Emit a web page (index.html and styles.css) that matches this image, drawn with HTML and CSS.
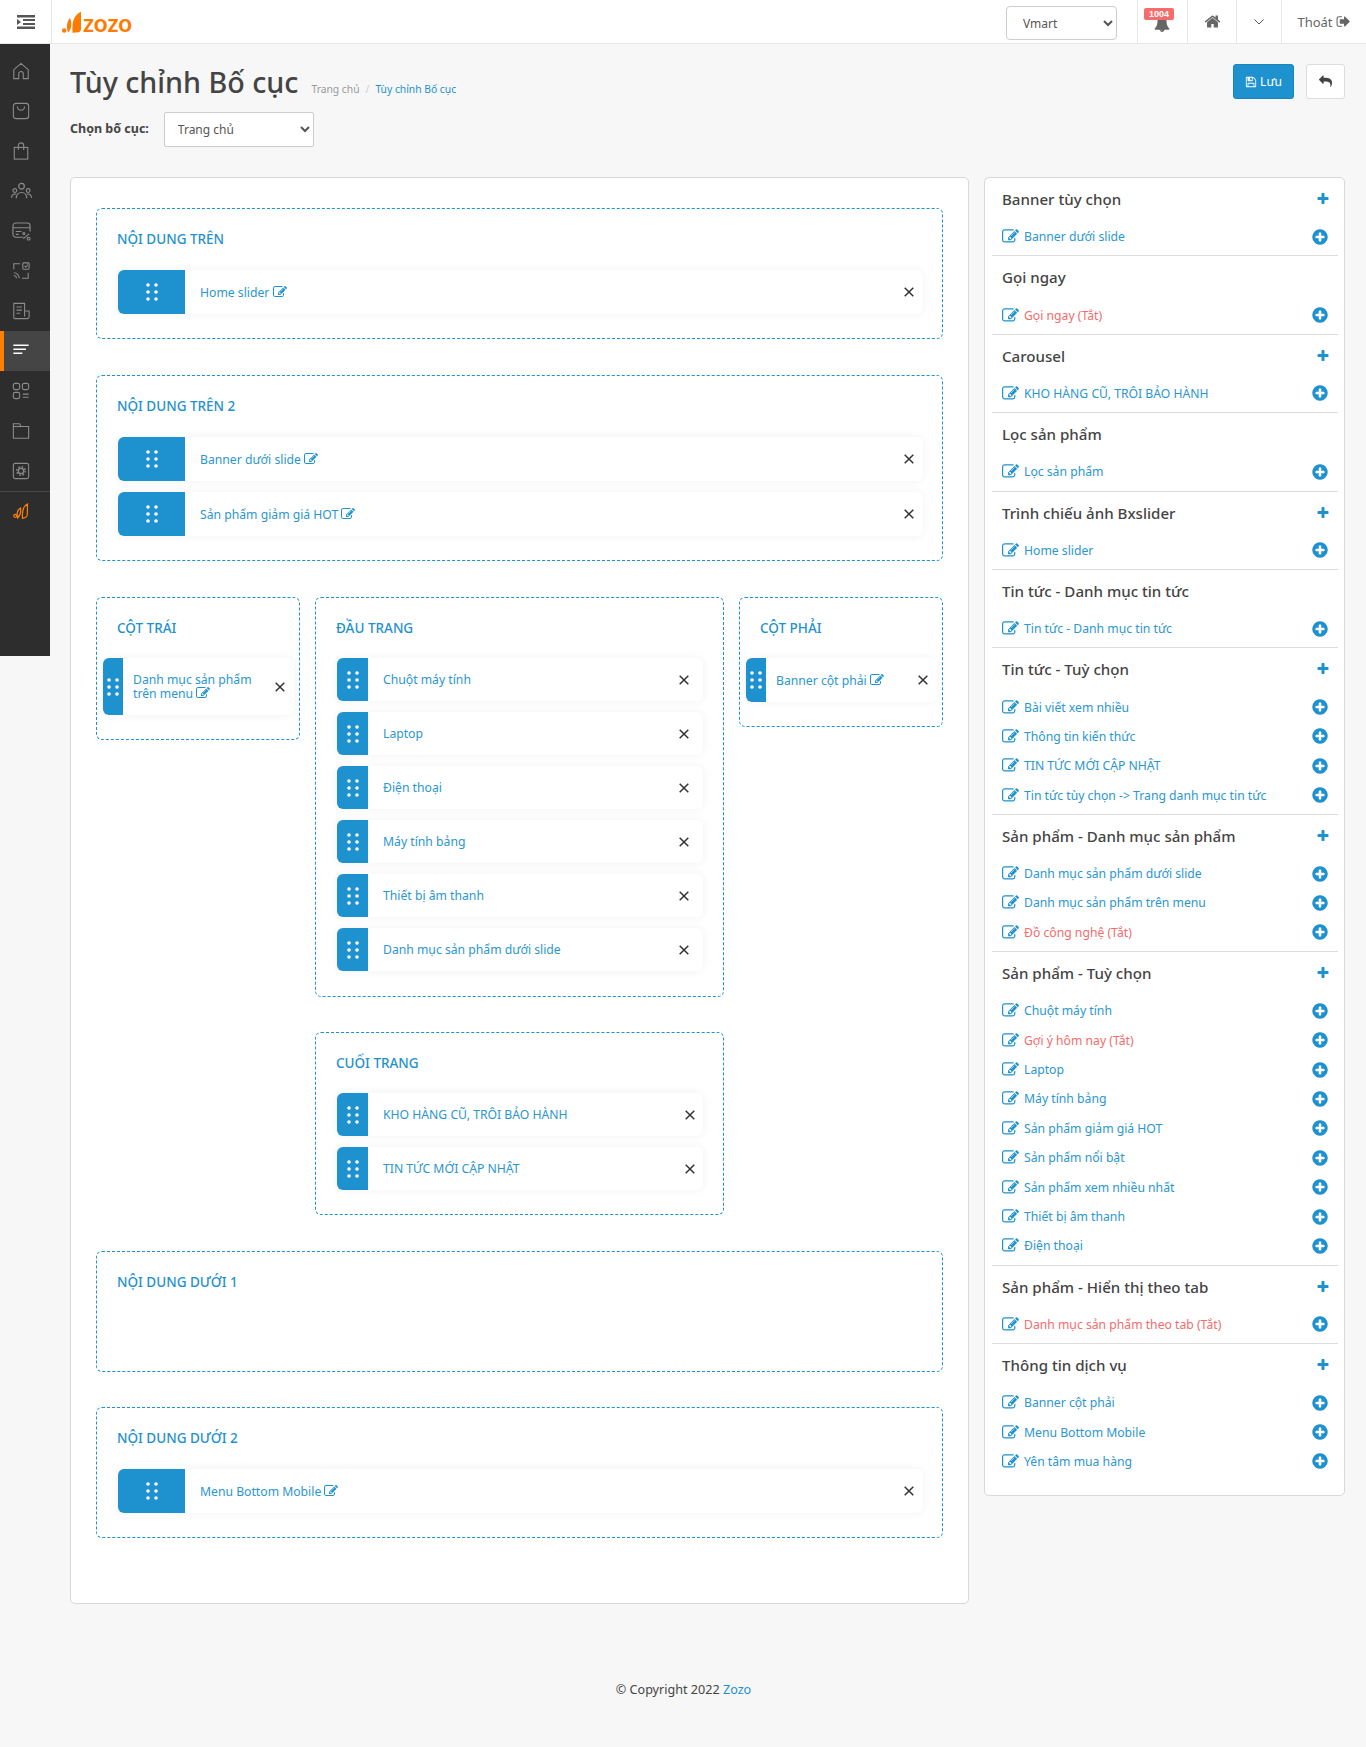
FILE: index.html
```html
<!DOCTYPE html>
<html lang="vi">
<head>
<meta charset="utf-8">
<title>Tùy chỉnh Bố cục</title>
<link rel="stylesheet" href="styles.css">
</head>
<body>
<svg class="defs" aria-hidden="true">
<symbol id="i-edit" viewBox="0 0 1792 1792"><path d="M888 1184l116-116-152-152-116 116v56h96v96h56zm440-720q-16-16-33 1l-350 350q-17 17-1 33t33-1l350-350q17-17 1-33zm80 594v190q0 119-84.5 203.5t-203.5 84.5h-832q-119 0-203.5-84.5t-84.5-203.5v-832q0-119 84.5-203.5t203.5-84.5h832q63 0 117 25 15 7 18 23 3 17-9 29l-49 49q-14 14-32 8-23-6-45-6h-832q-66 0-113 47t-47 113v832q0 66 47 113t113 47h832q66 0 113-47t47-113v-126q0-13 9-22l64-64q15-15 35-7t20 29zm-96-738l288 288-672 672h-288v-288zm444 132l-92 92-288-288 92-92q28-28 68-28t68 28l152 152q28 28 28 68t-28 68z"/></symbol>
<symbol id="i-pc" viewBox="0 0 1792 1792"><path d="M1344 960v-128q0-26-19-45t-45-19h-256v-256q0-26-19-45t-45-19h-128q-26 0-45 19t-19 45v256h-256q-26 0-45 19t-19 45v128q0 26 19 45t45 19h256v256q0 26 19 45t45 19h128q26 0 45-19t19-45v-256h256q26 0 45-19t19-45zm320-64q0 209-103 385.5t-279.5 279.5-385.5 103-385.5-103-279.5-279.5-103-385.5 103-385.5 279.5-279.5 385.5-103 385.5 103 279.5 279.5 103 385.5z"/></symbol>
<symbol id="i-plus" viewBox="0 0 1792 1792"><path d="M1600 736v192q0 40-28 68t-68 28h-416v416q0 40-28 68t-68 28h-192q-40 0-68-28t-28-68v-416h-416q-40 0-68-28t-28-68v-192q0-40 28-68t68-28h416v-416q0-40 28-68t68-28h192q40 0 68 28t28 68v416h416q40 0 68 28t28 68z"/></symbol>
<symbol id="i-grip" viewBox="0 0 12 18"><circle cx="2" cy="2" r="1.8"/><circle cx="10" cy="2" r="1.8"/><circle cx="2" cy="9" r="1.8"/><circle cx="10" cy="9" r="1.8"/><circle cx="2" cy="16" r="1.8"/><circle cx="10" cy="16" r="1.8"/></symbol>
<symbol id="i-x" viewBox="0 0 10 10"><path d="M.7.7l8.6 8.6M9.3.7L.7 9.3" fill="none" stroke="currentColor" stroke-width="1.5"/></symbol>
</svg>

<header class="topbar">
  <button class="toggle" type="button" aria-label="Menu">
    <svg class="toggle-ico" viewBox="0 0 18 14"><path d="M0 0h18v2.4H0zM6 4h12v2H6zM6 8h12v2H6zM0 11.6h18V14H0zM0 4l4 3-4 3z" fill="#555"/></svg>
  </button>
  <a class="logo" href="#">
    <svg class="logo-mark" viewBox="0 0 20 22"><circle cx="2.2" cy="19.5" r="2.2" fill="#ff7a00"/><path d="M8 7C5 10 4 16 6 21.500 9 19 10.500 13 8 7z" fill="#ff7a00"/><path d="M19 .8C13 4 9.500 9 10.500 21.800L17 21.200C18.500 20.300 19 19 19 17.500z" fill="#ff7a00"/></svg>
    <span class="logo-text">zozo</span>
  </a>
  <div class="top-right">
    <select class="shop-select"><option>Vmart</option></select>
    <a class="top-cell cell-bell" href="#">
      <span class="badge">1004</span>
      <svg class="bell" viewBox="0 0 1792 1792"><path d="M912 1696q0-16-16-16-59 0-101.5-42.5t-42.5-101.5q0-16-16-16t-16 16q0 73 51.5 124.5t124.5 51.5q16 0 16-16zm816-288q0 52-38 90t-90 38h-448q0 106-75 181t-181 75-181-75-75-181h-448q-52 0-90-38t-38-90q50-42 91-88t85-119.5 74.5-158.5 50-206 19.5-260q0-152 117-282.5t307-158.5q-8-19-8-39 0-40 28-68t68-28 68 28 28 68q0 20-8 39 190 28 307 158.5t117 282.5q0 139 19.5 260t50 206 74.5 158.5 85 119.5 91 88z"/></svg>
    </a>
    <a class="top-cell cell-home" href="#"><svg class="home" viewBox="0 0 1792 1792"><path d="M1472 992v480q0 26-19 45t-45 19h-384v-384h-256v384h-384q-26 0-45-19t-19-45v-480q0-1 .5-3t.5-3l575-474 575 474q1 2 1 6zm223-69l-62 74q-8 9-21 11h-3q-13 0-21-7l-692-577-692 577q-12 8-24 7-13-2-21-11l-62-74q-8-10-7-23.5t11-21.5l719-599q32-26 76-26t76 26l244 204v-195q0-14 9-23t23-9h192q14 0 23 9t9 23v408l219 182q10 8 11 21.5t-7 23.5z"/></svg></a>
    <a class="top-cell cell-down" href="#"><svg class="chev" viewBox="0 0 10 6"><path d="M.5.5L5 5 9.500.5" fill="none" stroke="#555" stroke-width="1"/></svg></a>
    <a class="top-cell cell-out" href="#">Thoát <svg class="out" viewBox="0 0 1792 1792"><path d="M704 1440q0 4 1 20t.5 26.5-3 23.5-10 19.5-20.5 6.500h-320q-119 0-203.5-84.5t-84.5-203.5v-704q0-119 84.5-203.5t203.5-84.5h320q13 0 22.5 9.500t9.500 22.500q0 4 1 20t.5 26.500-3 23.500-10 19.500-20.500 6.500h-320q-66 0-113 47t-47 113v704q0 66 47 113t113 47h312l11.500 1 11.500 3 8 5.500 7 9 2 13.500zm928-544q0 26-19 45l-544 544q-19 19-45 19t-45-19-19-45v-288h-448q-26 0-45-19t-19-45v-384q0-26 19-45t45-19h448v-288q0-26 19-45t45-19 45 19l544 544q19 19 19 45z"/></svg></a>
  </div>
</header>

<div class="shell">
  <nav class="sidebar">
    <a class="nav-item" href="#"><svg viewBox="0 0 20 20"><path d="M2 18.500V8.500L10 1.500l8 7V18.500h-5.500v-5.500a2.500 2.500 0 0 0-5 0V18.500z"/></svg></a>
    <a class="nav-item" href="#"><svg viewBox="0 0 20 20"><rect x="1.500" y="1.500" width="17" height="17" rx="3"/><path d="M6 5c.5 5.500 7.500 5.500 8 0"/></svg></a>
    <a class="nav-item" href="#"><svg viewBox="0 0 20 20"><rect x="2.500" y="6" width="15" height="13"/><path d="M7 9V4a3 3 0 0 1 6 0v5"/></svg></a>
    <a class="nav-item nav-wide" href="#"><svg viewBox="0 0 22 20"><circle cx="11" cy="4.500" r="3"/><circle cx="4" cy="9" r="2"/><circle cx="18" cy="9" r="2"/><path d="M5.500 17c0-8 11-8 11 0M.5 16.500c0-3.500 3-4.500 5-3.500M21.500 16.500c0-3.500-3-4.500-5-3.500"/></svg></a>
    <a class="nav-item nav-wide" href="#"><svg viewBox="0 0 20 20"><path d="M12 16H4a3 3 0 0 1-3-3V4a3 3 0 0 1 3-3h12a3 3 0 0 1 3 3v6M1 6h18M4 10h6M4 13h3M12 17.500l6-5"/><circle cx="12.500" cy="12" r="1"/><circle cx="17.500" cy="17.500" r="1.500"/></svg></a>
    <a class="nav-item" href="#"><svg viewBox="0 0 20 20"><path d="M2 8V2h7M18 12v6h-7M2 12a6 6 0 0 1 6 6M2 15a3 3 0 0 1 3 3"/><rect x="12" y="1" width="7" height="7" rx="1"/><path d="M14 4.500l1.300 1.300L17.500 3"/></svg></a>
    <a class="nav-item" href="#"><svg viewBox="0 0 20 20"><path d="M14 16V1.500H2v16a1 1 0 0 0 1 1h14a2 2 0 0 0 2-2V10h-5M5 5.500h6M5 9h6M5 12.500h4"/></svg></a>
    <a class="nav-item nav-active" href="#"><svg viewBox="0 0 20 20"><path d="M1.500 3.500h17M1.500 8h14M1.500 12.500h10" stroke-width="1.700"/></svg></a>
    <a class="nav-item" href="#"><svg viewBox="0 0 20 20"><rect x="1.500" y="1.500" width="7" height="7" rx="2"/><rect x="11.500" y="1.500" width="7" height="7" rx="2"/><rect x="1.500" y="11.500" width="7" height="7" rx="2"/><path d="M12 13.500h6.500M12 17h6.500"/></svg></a>
    <a class="nav-item" href="#"><svg viewBox="0 0 20 20"><path d="M1.500 18V2h7l1.500 3h8.500v13z"/><path d="M1.500 5h8.500"/></svg></a>
    <a class="nav-item" href="#"><svg viewBox="0 0 20 20"><rect x="1.500" y="1.500" width="17" height="17" rx="2"/><circle cx="10" cy="10" r="3" stroke-width="1.400"/><circle cx="10" cy="10" r="4.700" stroke-width="1.600" stroke-dasharray="1.850 1.840"/></svg></a>
    <a class="nav-item nav-brand" href="#"><svg viewBox="0 0 16 16"><circle cx="2.200" cy="12.800" r="1.500"/><path d="M7.500 5C4.500 7 3.600 11 4.600 15 7.200 12.500 8.200 9 7.500 5zM14.500 1C10.500 3 8.800 7 9.500 15.300 12.200 14.800 14 13.800 14.300 12z"/></svg></a>
  </nav>

  <main class="main">
    <div class="page-head">
      <div class="title-row">
        <h1 class="page-title">Tùy chỉnh Bố cục</h1>
        <ol class="crumbs"><li class="crumb-home">Trang chủ</li><li class="crumb-sep">/</li><li class="crumb-cur">Tùy chỉnh Bố cục</li></ol>
      </div>
      <div class="actions">
        <a class="btn btn-save" href="#"><svg class="btn-ico" viewBox="0 0 1792 1792"><path d="M512 1536h768v-384h-768v384zm896 0h128v-896q0-14-10-38.500t-20-34.500l-281-281q-10-10-34-20t-39-10v416q0 40-28 68t-68 28h-576q-40 0-68-28t-28-68v-416h-128v1280h128v-416q0-40 28-68t68-28h832q40 0 68 28t28 68v416zm-384-928v-320q0-13-9.500-22.500t-22.500-9.500h-192q-13 0-22.500 9.500t-9.500 22.500v320q0 13 9.500 22.500t22.500 9.500h192q13 0 22.500-9.500t9.500-22.500zm640 32v928q0 40-28 68t-68 28h-1344q-40 0-68-28t-28-68v-1344q0-40 28-68t68-28h928q40 0 88 20t76 48l280 280q28 28 48 76t20 88z"/></svg> Lưu</a>
        <a class="btn btn-back" href="#"><svg class="back-ico" viewBox="0 0 1792 1792"><path d="M1792 1120q0 166-127 451-3 7-10.500 24t-13.500 30-13 22q-12 17-28 17-15 0-23.500-10t-8.500-25q0-9 2.500-26.500t2.500-23.500q5-68 5-123 0-101-17.500-181t-48.500-138.500-80-101-105.500-69.500-133-42.500-154-21.500-175.500-6h-224v256q0 26-19 45t-45 19-45-19l-512-512q-19-19-19-45t19-45l512-512q19-19 45-19t45 19 19 45v256h224q713 0 875 403 53 134 53 333z"/></svg></a>
      </div>
    </div>
    <div class="layout-pick">
      <label class="pick-label">Chọn bố cục:</label>
      <select class="pick-select"><option>Trang chủ</option></select>
    </div>

    <div class="columns">
      <section class="board">
        <div class="zone zone-full">
          <h3 class="zone-title">NỘI DUNG TRÊN</h3>
          <div class="item"><span class="grip"><svg><use href="#i-grip"/></svg></span><span class="label">Home slider <svg class="ed"><use href="#i-edit"/></svg></span><svg class="x"><use href="#i-x"/></svg></div>
        </div>
        <div class="zone zone-full">
          <h3 class="zone-title">NỘI DUNG TRÊN 2</h3>
          <div class="item"><span class="grip"><svg><use href="#i-grip"/></svg></span><span class="label">Banner dưới slide <svg class="ed"><use href="#i-edit"/></svg></span><svg class="x"><use href="#i-x"/></svg></div>
          <div class="item"><span class="grip"><svg><use href="#i-grip"/></svg></span><span class="label">Sản phẩm giảm giá HOT <svg class="ed"><use href="#i-edit"/></svg></span><svg class="x"><use href="#i-x"/></svg></div>
        </div>

        <div class="three">
          <div class="zone zone-side">
            <h3 class="zone-title">CỘT TRÁI</h3>
            <div class="item item-wrap"><span class="grip"><svg><use href="#i-grip"/></svg></span><span class="label">Danh mục sản phẩm trên menu <svg class="ed"><use href="#i-edit"/></svg></span><svg class="x"><use href="#i-x"/></svg></div>
          </div>
          <div class="center-col">
            <div class="zone zone-mid">
              <h3 class="zone-title">ĐẦU TRANG</h3>
              <div class="item"><span class="grip"><svg><use href="#i-grip"/></svg></span><span class="label">Chuột máy tính</span><svg class="x"><use href="#i-x"/></svg></div>
              <div class="item"><span class="grip"><svg><use href="#i-grip"/></svg></span><span class="label">Laptop</span><svg class="x"><use href="#i-x"/></svg></div>
              <div class="item"><span class="grip"><svg><use href="#i-grip"/></svg></span><span class="label">Điện thoại</span><svg class="x"><use href="#i-x"/></svg></div>
              <div class="item"><span class="grip"><svg><use href="#i-grip"/></svg></span><span class="label">Máy tính bảng</span><svg class="x"><use href="#i-x"/></svg></div>
              <div class="item"><span class="grip"><svg><use href="#i-grip"/></svg></span><span class="label">Thiết bị âm thanh</span><svg class="x"><use href="#i-x"/></svg></div>
              <div class="item"><span class="grip"><svg><use href="#i-grip"/></svg></span><span class="label">Danh mục sản phẩm dưới slide</span><svg class="x"><use href="#i-x"/></svg></div>
            </div>
            <div class="zone zone-mid zone-foot">
              <h3 class="zone-title">CUỐI TRANG</h3>
              <div class="item"><span class="grip"><svg><use href="#i-grip"/></svg></span><span class="label">KHO HÀNG CŨ, TRÔI BẢO HÀNH</span><svg class="x"><use href="#i-x"/></svg></div>
              <div class="item"><span class="grip"><svg><use href="#i-grip"/></svg></span><span class="label">TIN TỨC MỚI CẬP NHẬT</span><svg class="x"><use href="#i-x"/></svg></div>
            </div>
          </div>
          <div class="zone zone-side">
            <h3 class="zone-title">CỘT PHẢI</h3>
            <div class="item"><span class="grip"><svg><use href="#i-grip"/></svg></span><span class="label">Banner cột phải <svg class="ed"><use href="#i-edit"/></svg></span><svg class="x"><use href="#i-x"/></svg></div>
          </div>
        </div>

        <div class="zone zone-full zone-empty">
          <h3 class="zone-title">NỘI DUNG DƯỚI 1</h3>
        </div>
        <div class="zone zone-full">
          <h3 class="zone-title">NỘI DUNG DƯỚI 2</h3>
          <div class="item"><span class="grip"><svg><use href="#i-grip"/></svg></span><span class="label">Menu Bottom Mobile <svg class="ed"><use href="#i-edit"/></svg></span><svg class="x"><use href="#i-x"/></svg></div>
        </div>
      </section>

      <aside class="palette">
        <div class="group">
          <div class="group-head"><h4>Banner tùy chọn</h4><svg class="add"><use href="#i-plus"/></svg></div>
          <div class="row"><svg class="ed"><use href="#i-edit"/></svg><span class="row-text">Banner dưới slide</span><svg class="pc"><use href="#i-pc"/></svg></div>
        </div>
        <div class="group">
          <div class="group-head"><h4>Gọi ngay</h4></div>
          <div class="row row-off"><svg class="ed"><use href="#i-edit"/></svg><span class="row-text">Gọi ngay (Tắt)</span><svg class="pc"><use href="#i-pc"/></svg></div>
        </div>
        <div class="group">
          <div class="group-head"><h4>Carousel</h4><svg class="add"><use href="#i-plus"/></svg></div>
          <div class="row"><svg class="ed"><use href="#i-edit"/></svg><span class="row-text">KHO HÀNG CŨ, TRÔI BẢO HÀNH</span><svg class="pc"><use href="#i-pc"/></svg></div>
        </div>
        <div class="group">
          <div class="group-head"><h4>Lọc sản phẩm</h4></div>
          <div class="row"><svg class="ed"><use href="#i-edit"/></svg><span class="row-text">Lọc sản phẩm</span><svg class="pc"><use href="#i-pc"/></svg></div>
        </div>
        <div class="group">
          <div class="group-head"><h4>Trình chiếu ảnh Bxslider</h4><svg class="add"><use href="#i-plus"/></svg></div>
          <div class="row"><svg class="ed"><use href="#i-edit"/></svg><span class="row-text">Home slider</span><svg class="pc"><use href="#i-pc"/></svg></div>
        </div>
        <div class="group">
          <div class="group-head"><h4>Tin tức - Danh mục tin tức</h4></div>
          <div class="row"><svg class="ed"><use href="#i-edit"/></svg><span class="row-text">Tin tức - Danh mục tin tức</span><svg class="pc"><use href="#i-pc"/></svg></div>
        </div>
        <div class="group">
          <div class="group-head"><h4>Tin tức - Tuỳ chọn</h4><svg class="add"><use href="#i-plus"/></svg></div>
          <div class="row"><svg class="ed"><use href="#i-edit"/></svg><span class="row-text">Bài viết xem nhiều</span><svg class="pc"><use href="#i-pc"/></svg></div>
          <div class="row"><svg class="ed"><use href="#i-edit"/></svg><span class="row-text">Thông tin kiến thức</span><svg class="pc"><use href="#i-pc"/></svg></div>
          <div class="row"><svg class="ed"><use href="#i-edit"/></svg><span class="row-text">TIN TỨC MỚI CẬP NHẬT</span><svg class="pc"><use href="#i-pc"/></svg></div>
          <div class="row"><svg class="ed"><use href="#i-edit"/></svg><span class="row-text">Tin tức tùy chọn -&gt; Trang danh mục tin tức</span><svg class="pc"><use href="#i-pc"/></svg></div>
        </div>
        <div class="group">
          <div class="group-head"><h4>Sản phẩm - Danh mục sản phẩm</h4><svg class="add"><use href="#i-plus"/></svg></div>
          <div class="row"><svg class="ed"><use href="#i-edit"/></svg><span class="row-text">Danh mục sản phẩm dưới slide</span><svg class="pc"><use href="#i-pc"/></svg></div>
          <div class="row"><svg class="ed"><use href="#i-edit"/></svg><span class="row-text">Danh mục sản phẩm trên menu</span><svg class="pc"><use href="#i-pc"/></svg></div>
          <div class="row row-off"><svg class="ed"><use href="#i-edit"/></svg><span class="row-text">Đồ công nghệ (Tắt)</span><svg class="pc"><use href="#i-pc"/></svg></div>
        </div>
        <div class="group">
          <div class="group-head"><h4>Sản phẩm - Tuỳ chọn</h4><svg class="add"><use href="#i-plus"/></svg></div>
          <div class="row"><svg class="ed"><use href="#i-edit"/></svg><span class="row-text">Chuột máy tính</span><svg class="pc"><use href="#i-pc"/></svg></div>
          <div class="row row-off"><svg class="ed"><use href="#i-edit"/></svg><span class="row-text">Gợi ý hôm nay (Tắt)</span><svg class="pc"><use href="#i-pc"/></svg></div>
          <div class="row"><svg class="ed"><use href="#i-edit"/></svg><span class="row-text">Laptop</span><svg class="pc"><use href="#i-pc"/></svg></div>
          <div class="row"><svg class="ed"><use href="#i-edit"/></svg><span class="row-text">Máy tính bảng</span><svg class="pc"><use href="#i-pc"/></svg></div>
          <div class="row"><svg class="ed"><use href="#i-edit"/></svg><span class="row-text">Sản phẩm giảm giá HOT</span><svg class="pc"><use href="#i-pc"/></svg></div>
          <div class="row"><svg class="ed"><use href="#i-edit"/></svg><span class="row-text">Sản phẩm nổi bật</span><svg class="pc"><use href="#i-pc"/></svg></div>
          <div class="row"><svg class="ed"><use href="#i-edit"/></svg><span class="row-text">Sản phẩm xem nhiều nhất</span><svg class="pc"><use href="#i-pc"/></svg></div>
          <div class="row"><svg class="ed"><use href="#i-edit"/></svg><span class="row-text">Thiết bị âm thanh</span><svg class="pc"><use href="#i-pc"/></svg></div>
          <div class="row"><svg class="ed"><use href="#i-edit"/></svg><span class="row-text">Điện thoại</span><svg class="pc"><use href="#i-pc"/></svg></div>
        </div>
        <div class="group">
          <div class="group-head"><h4>Sản phẩm - Hiển thị theo tab</h4><svg class="add"><use href="#i-plus"/></svg></div>
          <div class="row row-off"><svg class="ed"><use href="#i-edit"/></svg><span class="row-text">Danh mục sản phẩm theo tab (Tắt)</span><svg class="pc"><use href="#i-pc"/></svg></div>
        </div>
        <div class="group group-last">
          <div class="group-head"><h4>Thông tin dịch vụ</h4><svg class="add"><use href="#i-plus"/></svg></div>
          <div class="row"><svg class="ed"><use href="#i-edit"/></svg><span class="row-text">Banner cột phải</span><svg class="pc"><use href="#i-pc"/></svg></div>
          <div class="row"><svg class="ed"><use href="#i-edit"/></svg><span class="row-text">Menu Bottom Mobile</span><svg class="pc"><use href="#i-pc"/></svg></div>
          <div class="row"><svg class="ed"><use href="#i-edit"/></svg><span class="row-text">Yên tâm mua hàng</span><svg class="pc"><use href="#i-pc"/></svg></div>
        </div>
      </aside>
    </div>
    <footer class="copy">© Copyright 2022 <a href="#">Zozo</a></footer>
  </main>
</div>
</body>
</html>
```
FILE: styles.css
```css
* { box-sizing: border-box; }
html, body { margin: 0; padding: 0; }
body {
  background: #f7f7f7;
  color: #444;
  font-family: "Noto Sans", "Open Sans", sans-serif;
  font-size: 13px;
  min-height: 1747px;
}
a { text-decoration: none; color: inherit; }
.defs { display: none; }

/* top bar */
.topbar {
  display: flex;
  align-items: stretch;
  height: 44px;
  background: #fff;
  border-bottom: 1px solid #e8e8e8;
}
.toggle {
  width: 52px;
  border: 0;
  border-right: 1px solid #e8e8e8;
  background: #fff;
  padding: 0 0 0 1px;
  display: flex;
  align-items: center;
  justify-content: center;
}
.toggle-ico { width: 18px; height: 14px; }
.logo { display: flex; align-items: center; gap: 1px; margin-left: 10px; padding-top: 1px; }
.logo-mark { width: 20px; height: 22px; }
.logo-text {
  color: #ff7a00;
  font-family: "Lato", sans-serif;
  font-weight: 700;
  font-size: 24px;
  line-height: 22px;
  padding-top: 2px;
}
.top-right { margin-left: auto; display: flex; align-items: stretch; }
.shop-select {
  width: 111px;
  height: 34px;
  margin: 6px 20px 0 0;
  padding: 0 8px 0 12px;
  border: 1px solid #ccc;
  border-radius: 4px;
  background: #fff;
  color: #555;
  font: 12px "Noto Sans", sans-serif;
}
.top-cell {
  display: flex;
  align-items: center;
  justify-content: center;
  border-left: 1px solid #e8e8e8;
  color: #666;
  position: relative;
}
.cell-bell { width: 50px; }
.cell-home { width: 49px; }
.cell-down { width: 45px; }
.cell-out { width: 85px; font-size: 13px; gap: 3px; }
.badge {
  position: absolute;
  left: 6px;
  top: 8px;
  width: 30px;
  height: 12px;
  border-radius: 2px;
  background: #f56c6c;
  color: #fff;
  font: 700 9px/12px "Liberation Sans", sans-serif;
  text-align: center;
  z-index: 1;
}
.bell { width: 16px; height: 16px; fill: #666; margin: 4px 0 0 -1px; }
.home { width: 17px; height: 17px; fill: #666; }
.chev { width: 10px; height: 6px; }
.out { width: 15px; height: 15px; fill: #666; }

/* sidebar + main */
.shell { display: flex; align-items: flex-start; }
.sidebar {
  width: 50px;
  height: 612px;
  flex: none;
  background: #2d2d2d;
  padding-top: 7px;
  display: flex;
  flex-direction: column;
}
.nav-item {
  height: 40px;
  display: flex;
  align-items: center;
  justify-content: center;
  padding-right: 8px;
  flex: none;
}
.nav-item svg {
  width: 18px;
  height: 18px;
  fill: none;
  stroke: #8c8c8c;
  stroke-width: 1.200;
}
.nav-wide svg { width: 21px; height: 19px; }
.nav-active { background: #454545; border-left: 4px solid #ff7f00; padding-right: 12px; }
.nav-active svg { stroke: #fff; }
.nav-brand { border-top: 1px solid #4a4a4a; }
.nav-brand svg { stroke: #ff7f00; width: 16px; height: 16px; margin-top: -2px; }

.main { flex: 1; min-width: 0; padding: 20px 21px 0 20px; }
.page-head { display: flex; justify-content: space-between; align-items: flex-start; }
.title-row { display: flex; align-items: baseline; height: 40px; }
.page-title {
  margin: 0;
  font-size: 28.700px;
  font-weight: 500;
  line-height: 35px;
  color: #444;
}
.crumbs { list-style: none; display: flex; margin: 0 0 0 13px; padding: 0; font-size: 10.300px; }
.crumb-home { color: #999; }
.crumb-sep { color: #ccc; margin: 0 6px; }
.crumb-cur { color: #1e91cf; }
.actions { display: flex; gap: 12px; }
.btn {
  height: 35px;
  border-radius: 3px;
  display: flex;
  align-items: center;
  justify-content: center;
}
.btn-save { width: 61px; background: #1e91cf; border: 1px solid #1b84bd; color: #fff; font-size: 12px; gap: 3px; }
.btn-ico { width: 12px; height: 12px; fill: #fff; }
.btn-back { width: 39px; background: #fff; border: 1px solid #ddd; }
.back-ico { width: 13px; height: 13px; fill: #444; }

.layout-pick { display: flex; align-items: center; gap: 15px; margin-top: 8px; height: 35px; }
.pick-label { font-weight: 700; font-size: 12.500px; color: #444; margin-top: -2px; }
.pick-select {
  width: 150px;
  height: 35px;
  padding: 0 8px 0 9px;
  border: 1px solid #ccc;
  border-radius: 2px;
  background: #fff;
  color: #555;
  font: 12px "Noto Sans", sans-serif;
}

.columns { display: flex; align-items: flex-start; gap: 15px; margin-top: 30px; }
.board {
  width: 899px;
  flex: none;
  height: 1427px;
  padding: 30px 25px;
  background: #fff;
  border: 1px solid #d8d8d8;
  border-radius: 5px;
}
.zone {
  border: 1px dashed #1e91cf;
  border-radius: 6px;
  padding: 20px 19px 13px 21px;
  margin-bottom: 36px;
}
.zone-title {
  margin: 0 0 21px -1px;
  font-size: 13.500px;
  font-weight: 500;
  line-height: 20px;
  color: #1e91cf;
}
.zone-empty { height: 121px; margin-bottom: 35px; }
.three { display: flex; gap: 15px; align-items: flex-start; }
.zone-side { width: 204px; flex: none; padding-left: 6px; padding-right: 5px; }
.zone-side .zone-title { margin-left: 14px; margin-bottom: 20px; }
.center-col { flex: 1; min-width: 0; }
.zone-mid { padding-right: 20px; padding-bottom: 14px; margin-bottom: 35px; }
.zone-mid .zone-title { margin-bottom: 20px; }
.zone-foot { padding-bottom: 13px; margin-bottom: 36px; }

.item {
  display: flex;
  align-items: center;
  min-height: 44px;
  margin-bottom: 11px;
  border-radius: 6px;
  background: #fff;
  box-shadow: 0 0 10px rgba(0, 0, 0, .06);
  padding-right: 9px;
}
.zone-mid .item { min-height: 43px; padding-right: 14px; }
.zone-foot .item { padding-right: 8px; }
.grip {
  align-self: stretch;
  flex: none;
  width: 67px;
  background: #1e91cf;
  border-radius: 6px 0 0 6px;
  display: flex;
  align-items: center;
  justify-content: center;
}
.grip svg { width: 12px; height: 18px; fill: #fff; }
.zone-mid .grip { width: 31px; }
.zone-side .grip { width: 20px; }
.label {
  flex: 1;
  min-width: 0;
  padding-left: 15px;
  font-size: 12.200px;
  line-height: 13px;
  color: #2a96d2;
}
.zone-side .label { padding-left: 10px; padding-right: 10px; }
.x { width: 10px; height: 10px; flex: none; color: #333; }
.item-wrap { min-height: 57px; }
.ed { fill: #1e91cf; flex: none; }
.label .ed { width: 14px; height: 14px; vertical-align: -2px; }

/* palette */
.palette {
  flex: 1;
  min-width: 0;
  height: 1319px;
  padding: 0 6px 0 7px;
  background: #fff;
  border: 1px solid #d8d8d8;
  border-radius: 5px;
}
.group { padding: 10px 0 4px; border-bottom: 1px solid #ddd; }
.group-last { border-bottom: 0; }
.group-head {
  display: flex;
  align-items: center;
  justify-content: space-between;
  height: 22px;
  margin-bottom: 12px;
  padding: 0 8px 0 10px;
}
.group-head h4 { margin: 0; font-size: 15.100px; font-weight: 500; line-height: 22px; color: #444; }
.add { width: 14px; height: 14px; fill: #1e91cf; }
.row {
  display: flex;
  align-items: center;
  height: 29.400px;
  padding: 0 9px 0 10px;
  color: #2a96d2;
  font-size: 12.200px;
}
.row .ed { width: 17px; height: 17px; }
.row-text { flex: 1; min-width: 0; margin-left: 5px; }
.row-off .row-text { color: #f56c6c; }
.pc { width: 18px; height: 18px; fill: #1e91cf; flex: none; }

.copy { margin-top: 77px; text-align: center; font-size: 12.600px; color: #444; margin-left: -48px; }
.copy a { color: #1e91cf; }
```
